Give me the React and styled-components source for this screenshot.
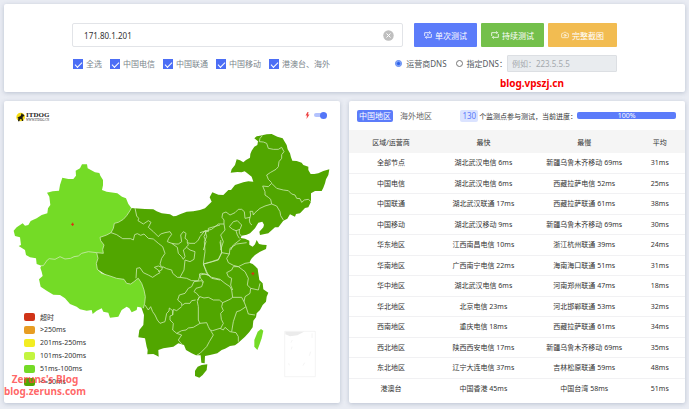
import React, { useState } from 'react';
import styled, { createGlobalStyle } from 'styled-components';
import { Camera } from 'lucide-react';

const networks = ['全选', '中国电信', '中国联通', '中国移动', '港澳台、海外'];

const legend = [
	{ color: '#d03417', label: '超时' },
	{ color: '#e79d23', label: '>250ms' },
	{ color: '#f3ed22', label: '201ms-250ms' },
	{ color: '#c3f53f', label: '101ms-200ms' },
	{ color: '#74db26', label: '51ms-100ms' },
	{ color: '#51a600', label: '<=50ms' },
];

const results = [
	['全部节点', '湖北武汉电信 6ms', '新疆乌鲁木齐移动 69ms', '31ms'],
	['中国电信', '湖北武汉电信 6ms', '西藏拉萨电信 52ms', '25ms'],
	['中国联通', '湖北武汉联通 17ms', '西藏拉萨联通 61ms', '38ms'],
	['中国移动', '湖北武汉移动 9ms', '新疆乌鲁木齐移动 69ms', '30ms'],
	['华东地区', '江西南昌电信 10ms', '浙江杭州联通 39ms', '24ms'],
	['华南地区', '广西南宁电信 22ms', '海南海口联通 51ms', '31ms'],
	['华中地区', '湖北武汉电信 6ms', '河南郑州联通 47ms', '18ms'],
	['华北地区', '北京电信 23ms', '河北邯郸联通 53ms', '32ms'],
	['西南地区', '重庆电信 18ms', '西藏拉萨联通 61ms', '34ms'],
	['西北地区', '陕西西安电信 17ms', '新疆乌鲁木齐移动 69ms', '35ms'],
	['东北地区', '辽宁大连电信 37ms', '吉林松原联通 59ms', '48ms'],
	['港澳台', '中国香港 45ms', '中国台湾 58ms', '51ms'],
];

export default function App() {
	return (
		<Page>
			<GlobalStyle />
			<SearchPanel />
			<Columns>
				<MapPanel />
				<ResultPanel />
			</Columns>
		</Page>
	);
}

function LoopIcon({ once }) {
	return (
		<svg width="8" height="8" viewBox="0 0 24 24" fill="none" stroke="#fff" strokeWidth="2.4">
			<path d="M2 15V5h17M22 9v10H5" />
			<path d="M16 1l4 4-4 4M8 15l-4 4 4 4" />
			{once && <path d="M10 10l2-1v7" />}
		</svg>
	);
}

function SearchPanel() {
	const [host, setHost] = useState('171.80.1.201');
	const [dns, setDns] = useState('isp');

	return (
		<SearchCard>
			<Form onSubmit={(e) => e.preventDefault()}>
				<Row>
					<HostBox>
						<HostInput
							aria-label="IP"
							value={host}
							onChange={(e) => setHost(e.target.value)}
						/>
						<ClearButton type="button" aria-label="清空" onClick={() => setHost('')}>
							<svg width="11" height="11" viewBox="0 0 22 22">
								<circle cx="11" cy="11" r="10.5" fill="#bfbfbf" />
								<path d="M7 7l8 8M15 7l-8 8" stroke="#fff" strokeWidth="2" />
							</svg>
						</ClearButton>
					</HostBox>
					<Actions>
						<ActionButton type="submit" $color="#5c7cfa">
							<LoopIcon once />单次测试
						</ActionButton>
						<ActionButton type="button" $color="#74c04b">
							<LoopIcon />持续测试
						</ActionButton>
						<ActionButton type="button" $color="#f2bc51" $wide>
							<Camera size={8} />完整截图
						</ActionButton>
					</Actions>
				</Row>
				<Row>
					<Options>
						{networks.map((name) => (
							<Option key={name}>
								<Checkbox type="checkbox" defaultChecked />
								{name}
							</Option>
						))}
					</Options>
					<DnsOptions>
						<Option $dark>
							<Radio
								type="radio"
								name="dns"
								checked={dns === 'isp'}
								onChange={() => setDns('isp')}
							/>
							运营商DNS
						</Option>
						<DnsCustom>
							<Option $dark>
								<Radio
									type="radio"
									name="dns"
									checked={dns === 'custom'}
									onChange={() => setDns('custom')}
								/>
								指定DNS：
							</Option>
							<DnsInput
								aria-label="指定DNS"
								placeholder="例如：223.5.5.5"
								disabled={dns === 'isp'}
							/>
						</DnsCustom>
					</DnsOptions>
				</Row>
			</Form>
			<SiteMark>blog.vpszj.cn</SiteMark>
		</SearchCard>
	);
}

function MapPanel() {
	return (
		<MapCard>
			<MapHeader>
				<Logo>
					<svg width="10" height="10" viewBox="0 0 30 30">
						<circle cx="14" cy="15" r="13" fill="#f5dc12" />
						<path
							d="M17 3l3 4 5 2-1 4-4 1v6l2 7h-4l-2-6-4 1-2 6H6l1-9-3-2 5-3 5-2z"
							fill="#1d1b12"
						/>
					</svg>
					<LogoText>
						<LogoName>ITDOG</LogoName>
						<LogoUrl>WWW.ITDOG.CN</LogoUrl>
					</LogoText>
				</Logo>
				<SwitchLabel aria-label="闪电">
					<svg width="5" height="7" viewBox="0 0 10 14">
						<path d="M5 0L1 7h3l-1 7 6-9H6l1-5z" fill="#ee4747" />
					</svg>
					<Switch type="checkbox" defaultChecked />
				</SwitchLabel>
			</MapHeader>
			<ChinaMap />
			<Legend>
				{legend.map((item) => (
					<LegendItem key={item.label}>
						<Swatch $color={item.color} />
						{item.label}
					</LegendItem>
				))}
			</Legend>
			<BlogMark>
				<span>Zeruns's Blog</span>
				<span>blog.zeruns.com</span>
			</BlogMark>
		</MapCard>
	);
}

function ChinaMap() {
	return (
		<MapSvg viewBox="12 387 1008 822">
			{/* provinces under 50ms */}
			<g fill="#51a600">
				<path d="M392 624L435 627 460 628 470 634 485 640 510 643 520 649 528 648 540 643 560 635 580 634 600 630 615 625 628 612 635 605 629 592 637 577 655 584 670 585 685 570 693 570 705 555 730 547 745 544 760 545 755 530 740 518 734 514 725 517 712 516 692 518 695 508 705 495 710 478 720 481 730 487 738 480 750 473 751 462 755 452 763 440 772 435 774 424 763 415 770 409 780 407 800 403 815 402 832 410 848 415 855 427 860 435 863 448 870 460 873 472 877 482 890 483 905 488 910 495 925 500 925 510 932 522 943 522 955 520 970 513 988 508 985 525 978 538 975 550 970 563 965 573 945 573 933 580 933 605 925 622 915 624 900 640 888 642 885 650 870 643 862 656 850 662 835 682 825 682 805 700 780 705 778 695 790 682 792 674 787 665 775 668 765 685 750 700 740 704 725 707 722 714 735 716 748 722 748 734 758 740 765 733 770 720 777 732 788 734 800 735 798 747 780 755 765 765 756 774 752 780 748 788 758 792 765 798 773 806 775 820 778 840 788 850 790 868 805 878 800 890 798 905 788 915 780 930 770 940 768 952 760 962 758 982 748 996 735 1010 715 1028 705 1036 690 1038 675 1046 665 1050 652 1060 630 1065 615 1068 614 1090 604 1088 602 1066 588 1066 575 1060 558 1050 552 1035 535 1030 520 1040 490 1045 475 1050 476 1070 468 1066 460 1062 442 1063 443 1050 440 1040 435 1015 415 1012 418 990 430 975 432 945 425 925 402 860 350 845 280 800 280 750 300 700 360 650z" />
				<path d="M605 1095L622 1093 620 1110 608 1125 598 1133 585 1128 585 1112 593 1100z" />
			</g>
			{/* provinces under 100ms */}
			<g fill="#74db26">
				<path d="M246 493L261 493 263 505 274 511 285 517 298 519 301 527 309 540 309 556 306 570 320 575 352 580 366 590 378 595 385 612 394 624 390 632 380 647 370 658 355 667 343 670 340 685 333 698 320 705 300 712 302 722 312 735 308 748 310 760 290 758 294 775 289 790 292 808 305 820 330 828 350 835 372 838 380 850 392 852 402 845 410 838 415 835 425 850 432 870 436 890 434 910 430 925 420 922 412 920 410 930 395 937 388 925 380 920 365 930 355 950 330 953 325 938 310 935 305 925 290 932 278 942 275 930 260 932 240 928 230 920 210 912 195 895 180 885 160 884 140 872 122 860 117 838 128 828 125 815 121 803 124 797 110 792 108 775 90 772 78 765 75 750 62 742 56 738 63 735 60 712 45 708 41 692 50 682 68 670 75 677 85 675 92 663 110 655 125 645 142 640 144 625 151 615 148 590 141 578 158 574 177 572 180 555 187 533 205 537 220 537 228 527 227 512 240 505z" />
				<path d="M783 987L790 992 785 1015 778 1035 772 1050 763 1040 763 1020 773 995z" />
			</g>
			<Borders>
				<path d="M394 624L390 632 380 647 370 658 355 667 343 670 340 685 333 698 320 705 300 712 302 722 312 735 308 748 310 760 290 758 265 755 245 760 235 768 222 770 212 775 195 777 180 770 165 778 148 776 142 780 130 797 122 797" />
				<path d="M290 758L294 775 289 790 292 808 305 820 330 828 350 835 372 838 380 850 392 852 402 845 410 838 415 835 425 850 432 870 436 890 434 910 430 925" />
				{/* north west */}
				<g transform="translate(270 570)">
					<path d="M63 128L80 134 98 146 122 146 130 150 134 134 142 131 152 136 162 132 175 145 190 147 205 160 218 170 225 190 215 205 210 222 215 232 205 228 193 232 205 240 210 248 198 255 188 262 175 255 160 248 150 233 140 235 138 265" />
					<path d="M135 54L140 78 146 85 144 92 160 102 175 92 183 97 175 112 190 125 205 140 212 132 225 128 240 125 245 133 236 145 232 155 245 160 258 162 265 162 275 155 272 135 280 125 288 130 285 145 292 150 292 158 300 160 315 160 325 150 330 140 345 122 355 125 355 115 390 105" />
					<path d="M245 160L262 172 265 190 275 200 280 208 285 200 280 180 290 172 300 180 315 185 312 208 300 215 285 210 282 240 270 262" />
					<path d="M292 158L295 165 288 172M345 122L350 140 343 155 345 185 340 222 350 250 365 265 390 270M340 222L365 215 385 208 395 188 390 155" />
					<path d="M205 245L215 240 218 230 230 236 245 240 248 250 262 262 270 262 290 265 305 272 325 272 330 255 345 252 360 258" />
				</g>
				{/* north east */}
				<g transform="translate(600 360)">
					<path d="M187 47L180 55 178 65 190 66 200 70 205 85 220 88 235 88 245 82 252 95 245 104 245 115 237 125 235 140 228 148 212 157 200 165 205 178 215 188" />
					<path d="M188 198L205 200 215 190 230 205 250 210 265 212 275 222 285 225 290 235 300 236 305 247 313 240 325 238 333 245" />
					<path d="M188 198L195 215 195 225 205 232 212 238 215 252 230 258 240 275 242 287 250 300" />
					<path d="M215 252L195 258 180 265 165 278 160 285 158 274 150 274 152 285 148 300 150 310 156 315" />
					<path d="M150 292L135 295 133 275 125 268 115 268 105 278 90 285 78 276 68 280 66 292 72 300 72 312 55 312 45 320 35 328 20 332 0 338" />
					<path d="M72 312L75 330 62 345 70 365 62 390M20 332L12 350 18 365 10 390" />
					<path d="M88 320L100 305 112 302 125 315 120 328 108 332 98 328zM118 328L118 340 125 350M108 332L112 345 118 355M122 358L100 375 92 390" />
				</g>
				{/* south */}
				<g transform="translate(390 720)">
					<path d="M192 125L215 122 218 128M235 105L215 100 208 102 212 115 220 125 215 140 198 145 192 155 200 160 208 170 202 185 205 200" />
					<path d="M192 125L185 140 175 145 165 160 148 165 143 180 155 190 155 197 165 190 180 190 185 182 197 180" />
					<path d="M202 180L210 170 222 174 235 172 250 180 268 180 278 188 300 178 308 172" />
					<path d="M220 72L230 95 235 105 245 112 270 118 285 130 300 140 305 150 308 172 335 172 342 185 348 200 330 212 320 215 310 245 305 275" />
					<path d="M205 200L205 240 210 250 230 248 235 260 240 270 248 272 270 265 280 270 285 262 300 275 318 278 325 290 325 305" />
					<path d="M278 188L275 200 280 212 272 220 274 238 280 250 272 265" />
					<path d="M242 272L250 285 238 305 230 320 220 330 210 340 200 346" />
					<path d="M155 200L140 212 130 208 128 225 120 228 120 240 130 250 128 270 140 280 155 272 168 270 175 264 190 262 210 250" />
					<path d="M45 195L55 210 62 200 68 215 75 225 82 240 90 250 105 245 110 220 117 213 118 204 128 212 128 225" />
					<path d="M140 280L155 285 145 300 155 312M348 200L355 222 375 225M342 185L345 170 360 160 362 145 385 150 390 130" />
					<path d="M362 145L352 135 355 115 345 95 325 80 310 80 305 90 290 98 295 110 305 115 302 135 308 150" />
					<path d="M275 38L298 42 290 55 295 68 310 76 325 80 345 70 358 68M298 42L300 25 320 12 350 8M222 72L265 60 275 38 272 0" />
				</g>
			</Borders>
			<g fill="none" stroke="#efefef" strokeWidth="2">
				<path d="M854 994h92v136h-92z" />
				<path d="M877 1020l-4 8M876 1040l-2 8M866 1090l2 6M932 1055l-4 12M914 1088l-5 9M936 1000v14" />
			</g>
			<path d="M856 995h56l-20 11-22 3-14-6z" fill="#ebebeb" />
			<path d="M218 668v10M213 673h9M759 816v10M754 821h9" stroke="#dd2f13" strokeWidth="3" />
		</MapSvg>
	);
}

function ResultPanel() {
	return (
		<Card>
			<ResultHeader>
				<Tab type="button" $active>中国地区</Tab>
				<Tab type="button">海外地区</Tab>
				<Status>
					<Count>130</Count>
					个监测点参与测试，当前进度：
				</Status>
				<Progress>100%</Progress>
			</ResultHeader>
			<Table>
				<thead>
					<tr>
						<Th $width="25%">区域/运营商</Th>
						<Th $width="30%">最快</Th>
						<Th $width="30%">最慢</Th>
						<Th $width="15%">平均</Th>
					</tr>
				</thead>
				<tbody>
					{results.map((row) => (
						<BodyRow key={row[0]}>
							{row.map((cell, i) => (
								<Td key={i}>{cell}</Td>
							))}
						</BodyRow>
					))}
				</tbody>
			</Table>
		</Card>
	);
}

const GlobalStyle = createGlobalStyle`
	* {
		box-sizing: border-box;
	}
	body {
		margin: 0;
		background: #e9ecf3;
		color: #333;
		font-family: "Noto Sans", "Noto Sans CJK SC", sans-serif;
		font-size: 7px;
	}
	button, input {
		margin: 0;
		font-family: inherit;
	}
`;

const Page = styled.main`
	display: flex;
	flex-direction: column;
	gap: 9px;
	padding: 4px 4px 6px;
`;

const Card = styled.section`
	min-width: 0;
	background: #fff;
	border-radius: 2px;
	box-shadow: 0 1px 4px rgba(80, 95, 130, 0.3);
`;

const SearchCard = styled(Card)`
	position: relative;
	padding: 19px 0 20px;
`;

const Form = styled.form`
	display: flex;
	flex-direction: column;
	gap: 8px;
	width: 80%;
	margin: 0 auto;
`;

const Row = styled.div`
	display: flex;
	align-items: center;
	justify-content: space-between;
	gap: 11px;
`;

const HostBox = styled.div`
	display: flex;
	flex: 1;
	align-items: center;
	height: 24px;
	padding: 0 8px 0 11px;
	border: 1px solid #e2e4e8;
	border-radius: 2px;
`;

const HostInput = styled.input`
	flex: 1;
	min-width: 0;
	padding: 0;
	border: 0;
	outline: 0;
	color: #333;
	font-size: 8px;
`;

const ClearButton = styled.button`
	display: flex;
	padding: 0;
	border: 0;
	background: none;
`;

const Actions = styled.div`
	display: flex;
	gap: 4px;
`;

const ActionButton = styled.button`
	display: flex;
	align-items: center;
	gap: 3px;
	height: 24px;
	padding: 0 ${(props) => (props.$wide ? 13 : 10)}px;
	border: 0;
	border-radius: 1px;
	background: ${(props) => props.$color};
	color: #fff;
	font-size: 8px;
	white-space: nowrap;
`;

const Options = styled.div`
	display: flex;
	gap: 8px;
	padding-left: 1px;
`;

const DnsOptions = styled.div`
	display: flex;
	align-items: center;
	gap: 9px;
`;

const DnsCustom = styled.div`
	display: flex;
	align-items: center;
`;

const Option = styled.label`
	display: flex;
	align-items: center;
	gap: ${(props) => (props.$dark ? 4 : 3)}px;
	color: ${(props) => (props.$dark ? '#555b61' : '#7b858c')};
	font-size: 8px;
	line-height: 12px;
	white-space: nowrap;
`;

const Checkbox = styled.input`
	display: grid;
	place-content: center;
	width: 10px;
	height: 10px;
	appearance: none;
	border: 1px solid #4c6ef5;
	&:checked {
		background: #4c6ef5;
	}
	&:checked::after {
		content: '';
		width: 6px;
		height: 3px;
		border: solid #fff;
		border-width: 0 0 1px 1px;
		transform: rotate(-45deg);
	}
`;

const Radio = styled.input`
	display: grid;
	place-content: center;
	width: 7px;
	height: 7px;
	appearance: none;
	border: 1px solid #767676;
	border-radius: 50%;
	&:checked {
		border-color: #4c7cf0;
	}
	&:checked::after {
		content: '';
		width: 3px;
		height: 3px;
		border-radius: 50%;
		background: #2b62ec;
		box-shadow: 0 0 0 1px #6d92f3;
	}
`;

const DnsInput = styled.input`
	width: 110px;
	height: 17px;
	padding: 0 4px;
	border: 1px solid #dcdfe3;
	border-radius: 1px;
	background: #e9ecef;
	font-size: 8px;
	&::placeholder {
		color: #a4a9ad;
	}
`;

const SiteMark = styled.strong`
	position: absolute;
	right: 121px;
	bottom: 2px;
	color: #f80000;
	font-size: 10px;
	line-height: 14px;
`;

const Columns = styled.div`
	display: grid;
	grid-template-columns: 1fr 1fr;
	gap: 9px;
`;

const MapCard = styled(Card)`
	position: relative;
`;

const MapHeader = styled.header`
	display: flex;
	align-items: center;
	justify-content: space-between;
	height: 28px;
	padding: 4px 13px 0 12px;
`;

const Logo = styled.div`
	display: flex;
	align-items: center;
`;

const LogoText = styled.div`
	display: flex;
	flex-direction: column;
	color: #222;
	font-family: "Liberation Serif", serif;
`;

const LogoName = styled.strong`
	font-size: 7px;
	line-height: 5px;
`;

const LogoUrl = styled.span`
	font-size: 3px;
	line-height: 4px;
`;

const SwitchLabel = styled.label`
	display: flex;
	align-items: center;
	gap: 4px;
	padding-bottom: 4px;
`;

const Switch = styled.input`
	display: flex;
	align-items: center;
	justify-content: flex-end;
	width: 13px;
	height: 4px;
	appearance: none;
	border-radius: 2px;
	background: #b3c2fd;
	&::after {
		content: '';
		width: 7px;
		height: 7px;
		border-radius: 50%;
		background: #5476f8;
	}
	&:not(:checked) {
		justify-content: flex-start;
	}
`;

const MapSvg = styled.svg`
	display: block;
	width: 100%;
`;

const Borders = styled.g`
	fill: none;
	stroke: #cdeab4;
	stroke-width: 2.4;
	stroke-linejoin: round;
`;

const Legend = styled.ul`
	position: absolute;
	left: 20px;
	bottom: 15px;
	margin: 0;
	padding: 0;
	list-style: none;
`;

const LegendItem = styled.li`
	display: flex;
	align-items: center;
	gap: 5px;
	height: 13px;
`;

const Swatch = styled.span`
	width: 11px;
	height: 8px;
	border-radius: 2px;
	background: ${(props) => props.$color};
`;

const BlogMark = styled.div`
	position: absolute;
	left: 0;
	bottom: 6px;
	display: flex;
	flex-direction: column;
	align-items: center;
	color: rgba(255, 64, 64, 0.8);
	font-size: 10px;
	font-weight: 700;
	line-height: 12px;
`;

const ResultHeader = styled.header`
	display: flex;
	align-items: center;
	height: 29px;
	padding: 0 9px 0 8px;
`;

const Tab = styled.button`
	height: 12px;
	margin-right: 5px;
	padding: 0 2px;
	border: 0;
	border-radius: 2px;
	background: ${(props) => (props.$active ? '#5c7cfa' : 'none')};
	color: ${(props) => (props.$active ? '#fff' : '#666')};
	font-size: 8px;
	line-height: 12px;
	white-space: nowrap;
`;

const Status = styled.div`
	display: flex;
	align-items: center;
	gap: 1px;
	margin-left: auto;
	white-space: nowrap;
`;

const Count = styled.span`
	padding: 0 2px;
	border-radius: 2px;
	background: #dbe3ff;
	color: #5c7cfa;
	font-size: 8px;
	line-height: 12px;
`;

const Progress = styled.div`
	width: 31%;
	height: 7px;
	border-radius: 2px;
	background: #5c7cfa;
	color: #fff;
	line-height: 7px;
	text-align: center;
`;

const Table = styled.table`
	width: 100%;
	margin-bottom: 4px;
	border-spacing: 0;
	table-layout: fixed;
	text-align: center;
`;

const Th = styled.th`
	width: ${(props) => props.$width};
	height: 23px;
	padding: 0;
	background: #f5f5f5;
	font-weight: 400;
`;

const BodyRow = styled.tr`
	height: 20px;
	&:nth-child(odd) {
		height: 21px;
	}
	&:not(:last-child) > td {
		border-bottom: 1px solid #f1f1f3;
	}
`;

const Td = styled.td`
	padding: 0;
	line-height: 10px;
	white-space: nowrap;
`;
